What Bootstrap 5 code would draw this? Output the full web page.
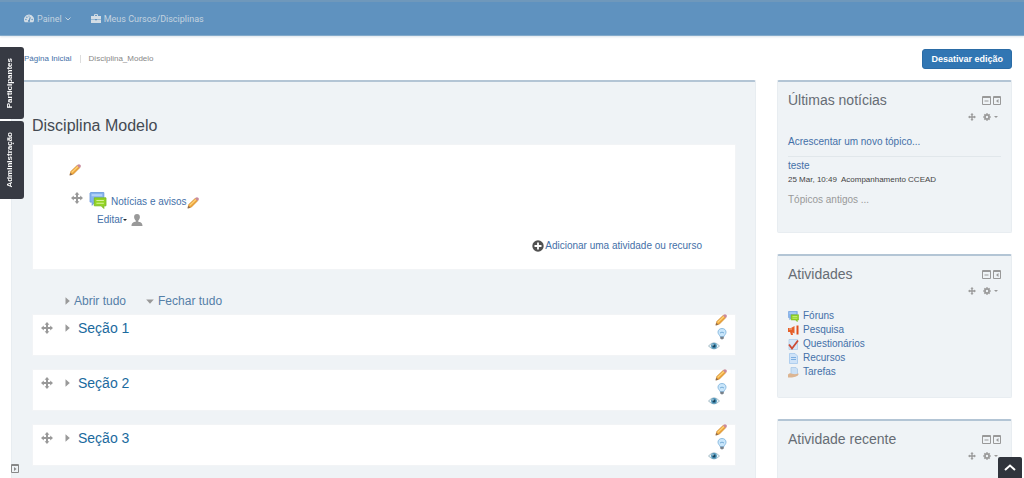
<!DOCTYPE html>
<html lang="pt-BR">
<head>
<meta charset="utf-8">
<meta name="viewport" content="width=device-width, initial-scale=1">
<title>Disciplina Modelo</title>
<link href="https://cdn.jsdelivr.net/npm/bootstrap@5.3.0/dist/css/bootstrap.min.css" rel="stylesheet">
<style>
  body { font: 10px/14px "Liberation Sans", sans-serif; color: #444a52; background: #fff; }
  a { color: #4470a8; text-decoration: none; }
  svg { display: block; flex: none; }
  .tool { border: 0; padding: 0; background: none; color: #999; display: block; }
  .topbar { background: #5f92bf; border-top: 2px solid #6f98bb; border-bottom: 1px solid #83aaca; height: 36px; padding: 0 24px; gap: 20px; box-shadow: 0 1px 2px #dde5ec; font: 9px/14px Roboto, sans-serif; }
  .topbar a { color: #c4d3df; gap: 3px; }
  .crumbs { padding: 2px 12px 0 24px; height: 44px; }
  .crumbs nav { font-size: 8px; color: #888; }
  .divider { width: 1px; height: 8px; background: #ddd; }
  .btn-edit { background: #3176b3; color: #fff; font: bold 9px/14px "Liberation Sans", sans-serif; padding: 2px 8px; border: 1px solid #2b6ca6; border-radius: 3px; }
  .layout { display: grid; grid-template-columns: minmax(0, 1fr) 235px; gap: 21px; padding: 0 12px 0 11px; }
  .panel { background: #eff3f6; border: 1px solid #e8edf1; border-top: 2px solid #b3c5d5; border-radius: 2px; }
  .course { padding: 34px 19px 10px 20px; }
  h1 { font: 16px/20px "Liberation Sans", sans-serif; margin: 0 0 8px; }
  h2 { font: 14px/20px "Liberation Sans", sans-serif; margin: 0; color: #666c74; }
  h3 { font: 14px/20px "Liberation Sans", sans-serif; margin: 0; }
  h3 a { color: #1b6a9e; }
  .sheet { background: #fff; border: 1px solid #f2f4f6; }
  .general { padding: 19px 33px 16px 36px; height: 126px; }
  .switches { font-size: 12px; line-height: 16px; padding: 0 33px; margin: 23px 0 5px; gap: 20px; }
  .switches a { color: #557fa8; }
  .grey { color: #999; }
  .topic { height: 42px; margin-bottom: 13px; padding: 3px 8px; }
  .topic-tools { margin-top: -4px; width: 19px; display: flex; flex-direction: column; align-items: flex-end; gap: 2px; }
  .topic-tools .tool:last-child { align-self: flex-start; }
  .side { margin-bottom: 21px; padding: 8px 10px 18px; }
  .news { padding-bottom: 25px; }
  .side hr { margin: 7px 0 2px; color: #b9c4cc; }
  .block-head { margin-bottom: 11px; }
  .head-icons { gap: 2px; }
  .head-tools { height: 14px; padding-right: 3px; gap: 3px; }
  .meta { font-size: 8px; color: #444; margin-bottom: 6px; }
  .dock { top: 47px; left: 0; z-index: 5; gap: 2px; }
  .dock button { width: 24px; border: 0; border-radius: 0 3px 3px 0; background: #373a43; color: #fff; padding: 11px 0; display: flex; justify-content: center; align-items: center; }
  .dock span { writing-mode: vertical-rl; transform: rotate(180deg); font: bold 8px/10px "Liberation Sans", sans-serif; padding-left: 4px; }
  .dock-min { left: 11px; bottom: 5px; }
  .to-top { right: 2px; bottom: 0; width: 24px; height: 21px; background: #30343c; border-radius: 2px 2px 0 0; border: 0; padding: 0; display: grid; place-items: center; }
</style>
</head>
<body class="vh-100 overflow-hidden">
<svg width="0" height="0" class="position-absolute" aria-hidden="true">
  <symbol id="pencil" viewBox="0 0 12 12"><path d="M1 11l.7-3.500L8.300 1.200l2.500 2.500L4.300 10.200z" fill="#eba43a" stroke="#d08f3a" stroke-width=".6"/><path d="M2.600 8.500L9.200 2.300" stroke="#ffd37a" stroke-width="1.200"/><path d="M8 1.500L9.200.5q1-.5 2 .3t.4 2.100l-1.100 1.100z" fill="#c98a9d"/><path d="M.5 11.500l.8-2.700 2 2z" fill="#8d6b50"/></symbol>
  <symbol id="move" viewBox="0 0 12 12"><path d="M6 0l2.400 2.800H7v2.200h2.200V3.600L12 6 9.200 8.400V7H7v2.200h1.400L6 12 3.600 9.200H5V7H2.800v1.400L0 6l2.800-2.400V5H5V2.800H3.600z" fill="currentColor"/></symbol>
  <symbol id="forum" viewBox="0 0 16 16"><path d="M1 .5h12.500v9H5L2.500 12.500V9.500H.5V1z" fill="#86b4ee" stroke="#6a9adb" stroke-width=".8"/><path d="M2 2h10v2H2z" fill="#b4d2f7"/><path d="M4.500 5.500h11v7.500h-2v2.500L11 13H4.500z" fill="#94d424" stroke="#79b821" stroke-width=".8"/><path d="M6.500 8h7M6.500 10.500h7" stroke="#d7f49b"/></symbol>
  <symbol id="bulb" viewBox="0 0 10 12"><path d="M5 .5c2.600 0 4 1.700 4 3.700C9 6.200 7.500 6.700 7 8.500H3C2.500 6.700 1 6.200 1 4.200 1 2.200 2.400.5 5 .5z" fill="#c9e6fb" stroke="#85b7de" stroke-width=".9"/><path d="M3 5q2-1.800 4 0" fill="none" stroke="#6ea7d4" stroke-width=".9"/><path d="M3.200 8.800h3.600v2H6L5 11.800l-1-1h-.8z" fill="#777f88"/></symbol>
  <symbol id="eye" viewBox="0 0 12 8"><path d="M.5 4Q6-2.500 11.500 4 6 10 .5 4z" fill="#e8f3f8" stroke="#94aebb" stroke-width=".8"/><circle cx="6" cy="3.900" r="2.900" fill="#4b93b8"/><circle cx="6" cy="3.900" r="1.500" fill="#17445e"/><circle cx="5" cy="2.900" r=".7" fill="#fff"/></symbol>
  <symbol id="cog" viewBox="0 0 10 10"><g stroke="currentColor" stroke-width="2"><path d="M5 .3v9.400M.3 5h9.400M1.700 1.700l6.600 6.600M8.300 1.700L1.700 8.300"/></g><circle cx="5" cy="5" r="3.300" fill="currentColor"/><circle cx="5" cy="5" r="1.500" fill="#eff3f6"/></symbol>
  <symbol id="collapse" viewBox="0 0 9 9"><path d="M.5 .5h8v8h-8zM.5 1.500h8M2.500 5h4" fill="none" stroke="currentColor"/></symbol>
  <symbol id="dockit" viewBox="0 0 8 9"><path d="M.5 .5h7v8h-7zM.5 1.500h7" fill="none" stroke="currentColor"/><path d="M5.500 3v4L3 5z" fill="currentColor"/></symbol>
  <symbol id="right" viewBox="0 0 5 8"><path d="M.5 .3L4.800 4 .5 7.700z" fill="currentColor"/></symbol>
  <symbol id="down" viewBox="0 0 8 5"><path d="M.2 .5L4 4.800 7.800.5z" fill="currentColor"/></symbol>
  <symbol id="caret" viewBox="0 0 4 2"><path d="M0 0h4L2 2z" fill="currentColor"/></symbol>
</svg>

<header class="topbar d-flex align-items-center">
  <a href="#" class="d-flex align-items-center">
    <svg width="10" height="9" viewBox="0 0 10 9"><path d="M5 .5a5 5 0 0 1 4.200 7.800H.8A5 5 0 0 1 5 .5z" fill="#d3dde5"/><path d="M5 7L6.300 3.200" stroke="#5f92bf" stroke-width="1.100"/><g fill="#5f92bf"><circle cx="5" cy="7" r="1.100"/><circle cx="1.900" cy="5.500" r=".7"/><circle cx="2.900" cy="3.200" r=".7"/><circle cx="5" cy="2.100" r=".6"/><circle cx="8.100" cy="5.500" r=".7"/></g></svg>
    Painel
    <svg width="6" height="4" viewBox="0 0 6 4"><path d="M.5 .5L3 3 5.500.5" fill="none" stroke="#c4d3df"/></svg>
  </a>
  <a href="#" class="d-flex align-items-center">
    <svg width="10" height="9" viewBox="0 0 10 9"><path d="M3.500 2V.6h3V2" fill="none" stroke="#d3dde5"/><path d="M0 2h10v3H0zM0 5.500h4v.8h2v-.8h4V9H0z" fill="#d3dde5"/></svg>
    Meus Cursos/Disciplinas
  </a>
</header>

<div class="crumbs d-flex align-items-center justify-content-between">
  <nav class="d-flex align-items-center gap-2" aria-label="Trilha">
    <a href="#">Página Inicial</a><span class="divider"></span><span>Disciplina_Modelo</span>
  </nav>
  <button type="button" class="btn btn-edit">Desativar edição</button>
</div>

<div class="layout">
  <main class="panel course">
    <h1>Disciplina Modelo</h1>
    <section class="sheet general d-flex flex-column">
      <button class="tool" aria-label="Editar sumário"><svg width="12" height="12"><use href="#pencil"/></svg></button>
      <div class="d-flex mt-3">
        <button class="tool align-self-start" aria-label="Mover"><svg width="16" height="12"><use href="#move"/></svg></button>
        <div class="ms-1">
          <div class="d-flex align-items-end">
            <svg width="18" height="17" class="me-1"><use href="#forum"/></svg>
            <a href="#">Notícias e avisos</a>
            <button class="tool" aria-label="Editar título"><svg width="12" height="12"><use href="#pencil"/></svg></button>
          </div>
          <div class="d-flex align-items-center ms-1 ps-1 mt-1">
            <a href="#" class="d-flex align-items-center">Editar<svg width="4" height="2" class="text-dark"><use href="#caret"/></svg></a>
            <button class="tool ms-1" aria-label="Grupos"><svg width="12" height="12" viewBox="0 0 12 12"><path d="M6 0c2 0 2.900 1.300 2.900 3S8 5.800 7.300 6.500v1.200c2 .3 4.200 1 4.200 4.300H.5C.5 8.700 2.700 8 4.700 7.700V6.500C4 5.800 3.100 4.700 3.100 3S4 0 6 0z" fill="#999"/></svg></button>
          </div>
        </div>
      </div>
      <a href="#" class="d-flex align-items-center mt-auto align-self-end">
        <svg width="12" height="12" viewBox="0 0 12 12"><circle cx="6" cy="6" r="5.700" fill="#505050"/><path d="M6 2.500v7M2.500 6h7" stroke="#fff" stroke-width="1.800"/></svg>&hairsp;Adicionar uma atividade ou recurso</a>
    </section>
    <div class="switches d-flex">
      <a href="#" class="d-flex align-items-center gap-1"><svg width="5" height="8" class="grey"><use href="#right"/></svg>Abrir tudo</a>
      <a href="#" class="d-flex align-items-center gap-1"><svg width="8" height="5" class="grey"><use href="#down"/></svg>Fechar tudo</a>
    </div>
    <div id="topics"></div>
  </main>

  <aside>
    <section class="panel side news">
      <div class="block-head"><h2>Últimas notícias</h2></div>
      <a href="#">Acrescentar um novo tópico...</a>
      <hr>
      <div><a href="#">teste</a></div>
      <div class="meta">25 Mar, 10:49&nbsp; Acompanhamento CCEAD</div>
      <div><a href="#" class="grey">Tópicos antigos ...</a></div>
    </section>
    <section class="panel side">
      <div class="block-head"><h2>Atividades</h2></div>
      <ul class="list-unstyled mb-0">
        <li class="d-flex align-items-center gap-1"><svg width="11" height="11"><use href="#forum"/></svg><a href="#">Fóruns</a></li>
        <li class="d-flex align-items-center gap-1"><svg width="11" height="11" viewBox="0 0 11 11"><path d="M0 3h3l3.500-2v7.500L4.500 7.500 5 10H3L2 7H0z" fill="#e5602a"/><path d="M1 4h3" stroke="#f7b28a"/><path d="M8.500 .5h2v9h-2z" fill="#e24e1b"/></svg><a href="#">Pesquisa</a></li>
        <li class="d-flex align-items-center gap-1"><svg width="11" height="11" viewBox="0 0 11 11"><path d="M1 .5h8.500v10H1z" fill="#d6e7f8" stroke="#aac9e6" stroke-width=".7"/><path d="M1 5.500l3 4 6-8" fill="none" stroke="#cc4b35" stroke-width="1.800"/></svg><a href="#">Questionários</a></li>
        <li class="d-flex align-items-center gap-1"><svg width="11" height="11" viewBox="0 0 11 11"><path d="M1.500 .5h5.500l2.500 2.500v7.500h-8z" fill="#cfe3f8" stroke="#a3c8ec" stroke-width=".8"/><path d="M3 4.500h5M3 6.500h5" stroke="#7caee0"/></svg><a href="#">Recursos</a></li>
        <li class="d-flex align-items-center gap-1"><svg width="11" height="11" viewBox="0 0 11 11"><path d="M3 .5h5l1.500 1.500v6H3z" fill="#cbe0f5" stroke="#a2c4e5" stroke-width=".7"/><path d="M0 7.500q2-2 4-.7l3 .5 3.500-.8q.5 1-1 2.200T4 10.500H0z" fill="#dcb592"/></svg><a href="#">Tarefas</a></li>
      </ul>
    </section>
    <section class="panel side">
      <div class="block-head"><h2>Atividade recente</h2></div>
    </section>
  </aside>
</div>

<div class="dock position-fixed d-flex flex-column">
  <button type="button"><span>Participantes</span></button>
  <button type="button"><span>Administração</span></button>
</div>
<button class="tool dock-min position-fixed" aria-label="Expandir painel"><svg width="8" height="9" viewBox="0 0 8 9"><path d="M.5 .5h7v8h-7zM.5 1.500h7" fill="none" stroke="#888"/><path d="M3 3v4l2.500-2z" fill="#888"/></svg></button>
<button class="to-top position-fixed" aria-label="Voltar ao topo"><svg width="12" height="7" viewBox="0 0 12 7"><path d="M1 6l5-4.500L11 6" fill="none" stroke="#fff" stroke-width="2"/></svg></button>

<script src="https://cdn.jsdelivr.net/npm/bootstrap@5.3.0/dist/js/bootstrap.bundle.min.js"></script>
<script>
  const icon = (id, w, h, cls = '') => `<svg width="${w}" height="${h}" class="${cls}"><use href="#${id}"/></svg>`;
  const tool = (label, content, cls = '') => `<button class="tool ${cls}" aria-label="${label}">${content}</button>`;

  document.querySelector('#topics').innerHTML = [1, 2, 3].map(n => `
    <section class="sheet topic d-flex align-items-start">
      ${tool('Mover', icon('move', 12, 12), 'mt-1')}
      <h3 class="flex-grow-1 ms-2 ps-1"><a href="#" class="d-flex align-items-center">${icon('right', 5, 8, 'grey me-2')}Seção ${n}</a></h3>
      <div class="topic-tools">
        ${tool('Editar', icon('pencil', 12, 12))}
        ${tool('Destacar', icon('bulb', 10, 12))}
        ${tool('Ocultar', icon('eye', 12, 8))}
      </div>
    </section>`).join('');

  document.querySelectorAll('.block-head').forEach(head => {
    const title = head.innerHTML;
    head.innerHTML = `
      <div class="d-flex justify-content-between align-items-center">${title}
        <div class="head-icons d-flex">${tool('Recolher', icon('collapse', 9, 9))}${tool('Acoplar', icon('dockit', 8, 9))}</div>
      </div>
      <div class="head-tools d-flex justify-content-end align-items-center">
        ${tool('Mover', icon('move', 8, 8), 'me-1')}${tool('Ações', icon('cog', 8, 8))}${icon('caret', 4, 2, 'grey')}
      </div>`;
  });
</script>
</body>
</html>
